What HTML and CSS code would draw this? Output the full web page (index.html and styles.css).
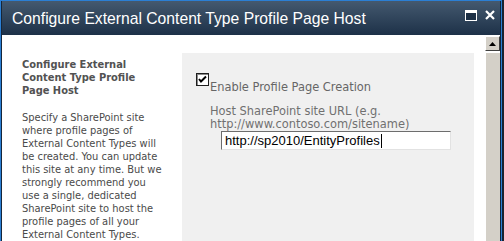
FILE: index.html
```html
<!DOCTYPE html>
<html lang="en">
<head>
  <meta charset="UTF-8" />
  <title>Configure External Content Type Profile Page Host</title>
  <link rel="stylesheet" href="styles.css">
</head>
<body>
  <div class="dialog">
    <div class="titlebar">
      <span class="title">Configure External Content Type Profile Page Host</span>
      <div class="title-buttons">
        <span class="title-btn">
          <svg width="12" height="11" viewBox="0 0 12 11"><rect x="0.5" y="0.5" width="11" height="10" fill="#1c2f45" stroke="#fff"/><rect x="1" y="1" width="10" height="2" fill="#fff"/></svg>
        </span>
        <span class="title-btn">
          <svg width="10" height="10" viewBox="0 0 10 10"><path d="M1 1L9 9M9 1L1 9" stroke="#fff" stroke-width="2.2"/></svg>
        </span>
      </div>
    </div>

    <div class="dialog-body">
      <div class="content">
        <div class="rule"></div>
        <div class="section">
          <div class="section-desc">
            <h3>Configure External Content Type Profile Page Host</h3>
            <p>Specify a SharePoint site<br>
              where profile pages of<br>
              External Content Types will<br>
              be created. You can update<br>
              this site at any time. But we<br>
              strongly recommend you<br>
              use a single, dedicated<br>
              SharePoint site to host the<br>
              profile pages of all your<br>
              External Content Types.</p>
          </div>
          <div class="section-panel">
            <div class="check-row">
              <span class="checkbox">
                <svg width="9" height="9" viewBox="0 0 9 9"><path d="M1 4L3 6.5L8 1.5" fill="none" stroke="#000" stroke-width="2"/></svg>
              </span>
              <span class="check-label">Enable Profile Page Creation</span>
            </div>
            <div class="field-label">Host SharePoint site URL (e.g. http://www.contoso.com/sitename)</div>
            <div class="text-input">http://sp2010/EntityProfiles<span class="caret"></span></div>
          </div>
        </div>
      </div>

      <!-- scrollbar -->
      <div class="scrollbar">
        <div class="scroll-up">
          <svg width="7" height="4" viewBox="0 0 7 4"><path d="M3.5 0L7 4H0Z" fill="#000"/></svg>
        </div>
        <div class="scroll-thumb"></div>
      </div>
    </div>
  </div>
</body>
</html>
```

FILE: styles.css
```css
body {
  margin: 0;
  background-color: #1b2330;
  font-family: 'DejaVu Sans Condensed', 'DejaVu Sans', sans-serif;
  overflow: hidden;
}

.dialog {
  width: 500px;
  height: 240px;
  border: 1px solid #2b7fd4;
  border-bottom: none;
  background-color: #fff;
  display: flex;
  flex-direction: column;
  overflow: hidden;
}

.titlebar {
  height: 34px;
  flex-shrink: 0;
  display: flex;
  justify-content: space-between;
  align-items: flex-start;
  background: linear-gradient(to bottom, #44596f, #1d3148);
  border-left: 1px solid #15263a;
  border-right: 1px solid #15263a;
}

.title {
  color: #fff;
  font-family: 'Liberation Sans', Arial, sans-serif;
  font-size: 15.7px;
  line-height: 32px;
  padding: 2px 0 0 10px;
}

.title-buttons {
  display: flex;
  gap: 8px;
  padding: 9px 5px 0 0;
}

.title-btn svg {
  display: block;
}

.dialog-body {
  flex: 1;
  display: flex;
  border-left: 1px solid #15263a;
  border-right: 1px solid #15263a;
  min-height: 0;
}

.content {
  flex: 1;
  display: flex;
  flex-direction: column;
  padding: 13px 11px 0 13px;
}

.rule {
  height: 1px;
  background-color: #d9d9d9;
}

.section {
  flex: 1;
  display: flex;
  margin-top: 5px;
}

.section-desc {
  width: 160px;
  padding: 5px 0 0 7px;
  color: #4a4a4a;
  font-size: 11px;
  line-height: 13px;
  white-space: nowrap;
}

.section-desc h3 {
  margin: 0;
  width: 120px;
  font-size: 11px;
  font-weight: bold;
  color: #525252;
  white-space: normal;
}

.section-desc p {
  margin: 14px 0 0;
}

.section-panel {
  flex: 1;
  background-color: #f0f0f0;
  padding: 20px 0 0 14px;
}

.check-row {
  display: flex;
  align-items: flex-start;
}

.checkbox {
  width: 11px;
  height: 11px;
  border: 1px solid #1e1e1e;
  box-shadow: inset 1px 1px #8a8a8a;
  background-color: #fff;
  display: flex;
  align-items: center;
  justify-content: center;
}

.check-label {
  margin: 7px 0 0 1px;
  color: #666;
  font-size: 12.7px;
  line-height: 13px;
}

.field-label {
  margin: 11px 0 0 14px;
  width: 250px;
  color: #707070;
  font-size: 12.7px;
  line-height: 13px;
}

.text-input {
  margin: 1px 0 0 25px;
  width: 225px;
  height: 17px;
  padding-left: 3px;
  border: 1px solid #e2e2e2;
  border-top-color: #6d6d6d;
  border-left-color: #6d6d6d;
  background-color: #fff;
  color: #000;
  font-family: 'Liberation Sans', Arial, sans-serif;
  font-size: 13px;
  line-height: 17px;
  white-space: nowrap;
}

.caret {
  display: inline-block;
  width: 1px;
  height: 14px;
  background-color: #000;
  vertical-align: -3px;
  margin-left: 1px;
}

.scrollbar {
  width: 15px;
  padding-top: 1px;
  display: flex;
  flex-direction: column;
}

.scroll-up {
  height: 13px;
  background-color: #d4d0c8;
  border: 1px solid #fff;
  border-right-color: #404040;
  border-bottom-color: #404040;
  display: flex;
  align-items: center;
  justify-content: center;
}

.scroll-thumb {
  flex: 1;
  margin-top: 1px;
  background-color: #d4d0c8;
  border-left: 1px solid #fff;
  border-top: 1px solid #fff;
  box-shadow: inset 1px 0 #d4d0c8;
}
```
